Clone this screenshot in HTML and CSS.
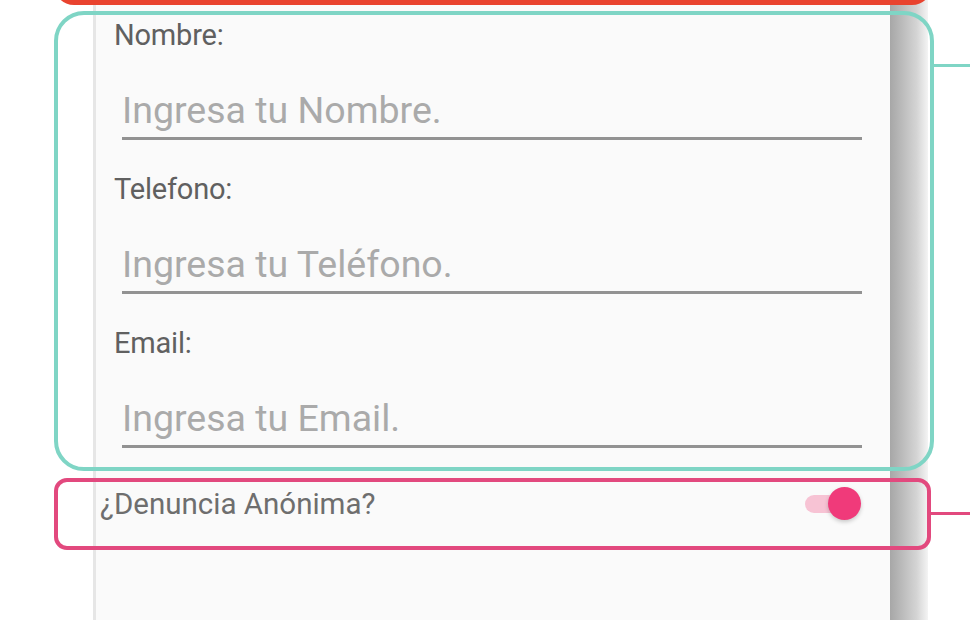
FILE: index.html
```html
<!DOCTYPE html>
<html lang="es">
<head>
  <meta charset="UTF-8">
  <title>Denuncia</title>
  <link rel="stylesheet" href="styles.css">
</head>
<body>

  <div class="stage">
    <div class="screen">
      <form class="form">
        <div class="field">
          <label for="nombre">Nombre:</label>
          <input id="nombre" type="text" placeholder="Ingresa tu Nombre.">
        </div>
        <div class="field">
          <label for="telefono">Telefono:</label>
          <input id="telefono" type="tel" placeholder="Ingresa tu Teléfono.">
        </div>
        <div class="field">
          <label for="email">Email:</label>
          <input id="email" type="email" placeholder="Ingresa tu Email.">
        </div>

        <div class="switch-row">
          <span>¿Denuncia Anónima?</span>
          <span class="switch on">
            <span class="track"></span>
            <span class="thumb"></span>
          </span>
        </div>
      </form>
    </div>
    <div class="bezel"></div>

    <!-- anotaciones -->
    <div class="mark mark-red"></div>
    <div class="mark mark-teal"></div>
    <div class="mark mark-pink"></div>
    <div class="wire wire-teal"></div>
    <div class="wire wire-pink"></div>
  </div>

</body>
</html>
```

FILE: styles.css
```css
* { margin: 0; padding: 0; box-sizing: border-box; }
html, body {
  width: 100%;
  height: 100%;
  background: #fff;
  font-family: Roboto, 'Liberation Sans', sans-serif;
  overflow: hidden;
}
.stage {
  position: relative;
  display: flex;
  height: 620px;
  padding-left: 93px;
}
.screen {
  width: 797px;
  height: 100%;
  background: #fafafa;
  border-left: 3px solid #e6e6e6;
}
.bezel {
  width: 38px;
  height: 100%;
  background: linear-gradient(to right, #a7a7a7, #bdbdbd 35%, #d4d4d4 70%, #f4f4f4);
}
.form {
  padding-top: 19px;
}
.field {
  margin-bottom: 33px;
}
.field label {
  display: block;
  margin-left: 18px;
  font-size: 29px;
  line-height: 32px;
  color: #606060;
  margin-bottom: 37px;
  letter-spacing: -0.2px;
}
.field input {
  display: block;
  width: calc(100% - 54px);
  margin-left: 26px;
  height: 52px;
  padding: 0 0 5px;
  border: none;
  border-bottom: 3px solid #929292;
  background: transparent;
  font-family: Roboto, 'Liberation Sans', sans-serif;
  font-size: 37.5px;
  color: #555;
  outline: none;
}
.field input::placeholder {
  color: #aaa;
}
.switch-row {
  display: flex;
  justify-content: space-between;
  align-items: center;
  margin-top: 39px;
  padding: 0 29px 0 4px;
  font-size: 29.5px;
  line-height: 32px;
  color: #6e6e6e;
}
.switch {
  position: relative;
  width: 56px;
  height: 34px;
}
.switch .track {
  position: absolute;
  left: 0;
  top: 8px;
  width: 46px;
  height: 18px;
  border-radius: 9px;
  background: #f7c3d4;
}
.switch .thumb {
  position: absolute;
  right: 0;
  top: 0;
  width: 33px;
  height: 33px;
  border-radius: 50%;
  background: #f03a7a;
  box-shadow: 0 2px 4px rgba(0,0,0,0.2);
}

/* anotaciones */
.mark {
  position: absolute;
  pointer-events: none;
}
.mark-red {
  left: 54px;
  top: -35px;
  width: 878px;
  height: 40px;
  border-radius: 24px;
  background: #e9432f;
}
.mark-teal {
  left: 54px;
  top: 11px;
  width: 880px;
  height: 460px;
  border: 4px solid #7fd5c5;
  border-radius: 30px;
}
.mark-pink {
  left: 54px;
  top: 478px;
  width: 877px;
  height: 72px;
  border: 4px solid #e2497e;
  border-radius: 13px;
}
.wire {
  position: absolute;
  right: 0;
  height: 3px;
}
.wire-teal {
  top: 64px;
  width: 37px;
  background: #7fd5c5;
}
.wire-pink {
  top: 512px;
  width: 40px;
  background: #e2497e;
}
```
